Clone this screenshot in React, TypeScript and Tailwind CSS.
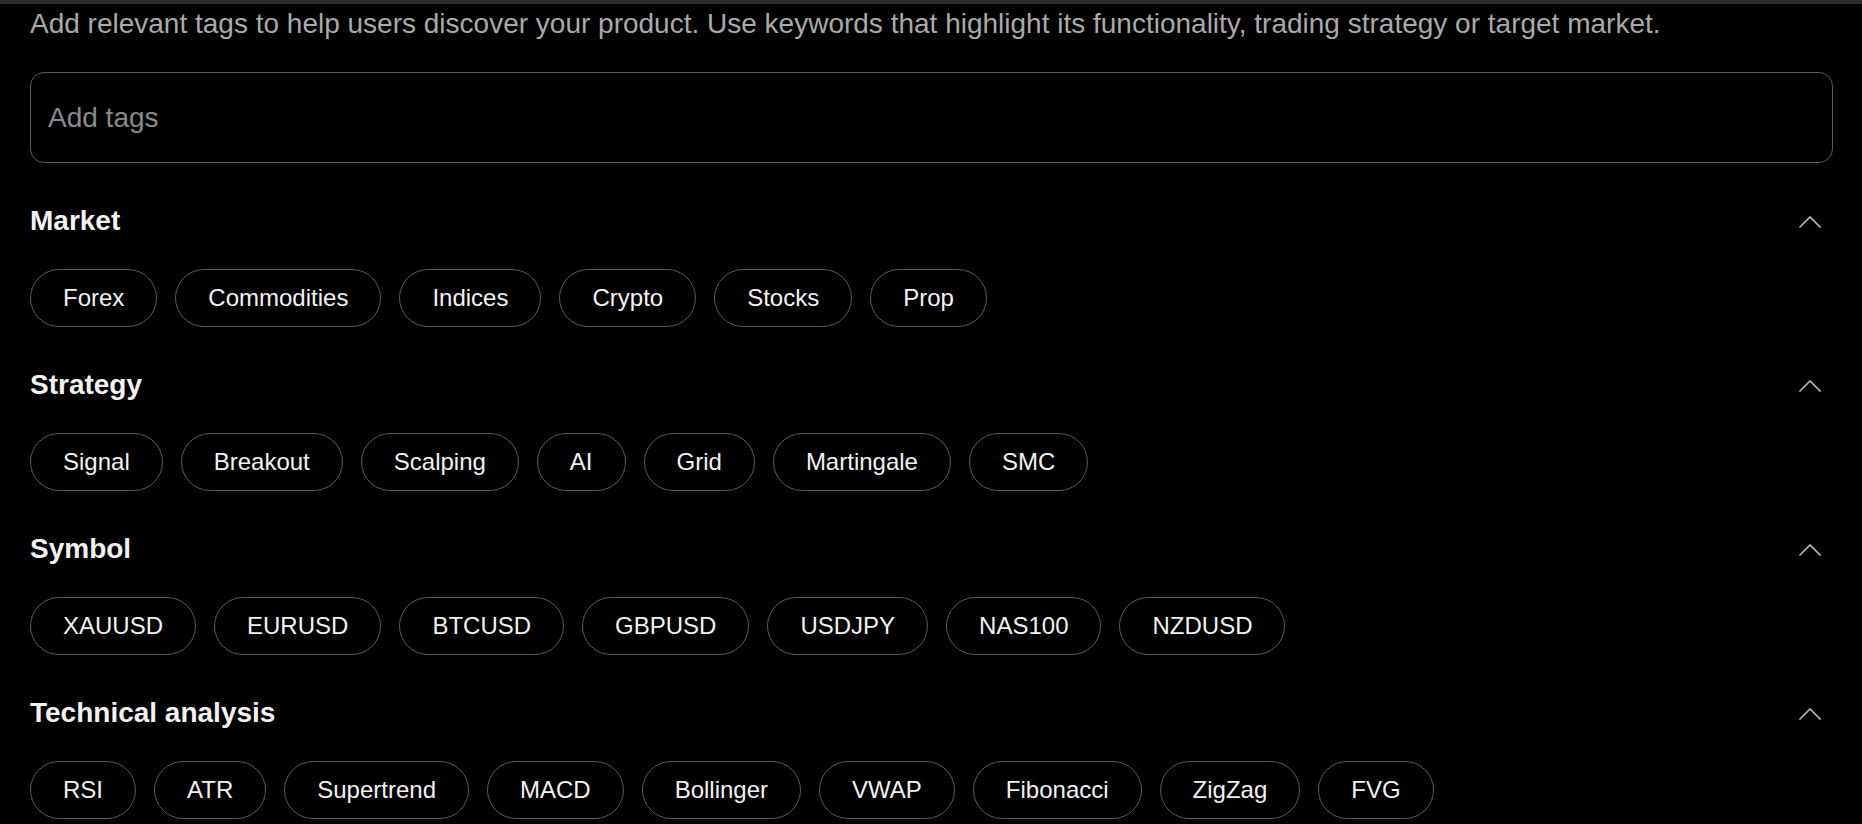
import { useState } from 'react'

type Section = { name: string; tags: string[] }

const SECTIONS: Section[] = [
  { name: 'Market', tags: ['Forex', 'Commodities', 'Indices', 'Crypto', 'Stocks', 'Prop'] },
  { name: 'Strategy', tags: ['Signal', 'Breakout', 'Scalping', 'AI', 'Grid', 'Martingale', 'SMC'] },
  { name: 'Symbol', tags: ['XAUUSD', 'EURUSD', 'BTCUSD', 'GBPUSD', 'USDJPY', 'NAS100', 'NZDUSD'] },
  { name: 'Technical analysis', tags: ['RSI', 'ATR', 'Supertrend', 'MACD', 'Bollinger', 'VWAP', 'Fibonacci', 'ZigZag', 'FVG'] },
]

function Chevron({ open }: { open: boolean }) {
  return (
    <svg width="22" height="13" viewBox="0 0 22 13" fill="none" stroke="#b3b3b3" strokeWidth="1.6" strokeLinecap="square"
      style={{ transform: open ? 'none' : 'rotate(180deg)' }}>
      <polyline points="1,12 11,2 21,12" />
    </svg>
  )
}

export default function App() {
  const [open, setOpen] = useState<Record<string, boolean>>(() => Object.fromEntries(SECTIONS.map(s => [s.name, true])))
  const [tags, setTags] = useState('')

  return (
    <div className="min-h-screen bg-black font-['Liberation_Sans',Arial,sans-serif]">
      <div className="h-[4px] bg-[#2b2b2b]" />
      <div className="pl-[30px] pr-[29px] pb-[20px]">
        <p className="mt-[4px] text-[28px] leading-[32px] text-[#a9a9a9]">
          Add relevant tags to help users discover your product. Use keywords that highlight its functionality, trading strategy or target market.
        </p>

        <div className="mt-[32px] h-[91px] rounded-[14px] border-[1.5px] border-[#5a5a5a] flex items-center px-[17px]">
          <input
            value={tags}
            onChange={e => setTags(e.target.value)}
            placeholder="Add tags"
            className="w-full bg-transparent outline-none text-[28px] text-white placeholder:text-[#8a8a8a]"
          />
        </div>

        {SECTIONS.map(s => (
          <div key={s.name} className="pt-[41px]">
            <div className="flex items-center justify-between h-[34px]">
              <h3 className="text-[28px] leading-[34px] font-bold text-[#f2f2f2]">{s.name}</h3>
              <button
                onClick={() => setOpen(o => ({ ...o, [s.name]: !o[s.name] }))}
                className="w-[46px] h-[34px] flex items-center justify-center cursor-pointer"
              >
                <Chevron open={open[s.name]} />
              </button>
            </div>
            {open[s.name] && (
              <div className="mt-[31px] flex flex-wrap gap-[18px]">
                {s.tags.map(t => (
                  <button
                    key={t}
                    className="h-[58px] px-[32px] rounded-full border-[1.5px] border-[#5a5a5a] text-[24px] text-[#f2f2f2] cursor-pointer"
                  >
                    {t}
                  </button>
                ))}
              </div>
            )}
          </div>
        ))}
      </div>
    </div>
  )
}
